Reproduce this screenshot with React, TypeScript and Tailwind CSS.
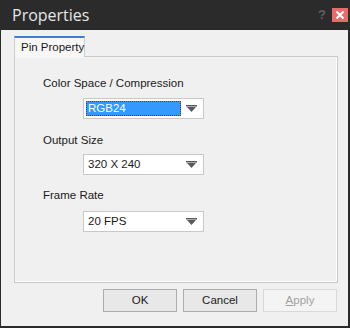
import React from "react";

function Arrow() {
  return (
    <svg width="11" height="7" viewBox="0 0 11 7" className="shrink-0">
      <rect x="0" y="0" width="11" height="1.5" fill="#5a5a5a" />
      <polygon points="1,2 10,2 5.5,7" fill="#5a5a5a" />
    </svg>
  );
}

function Select({ value, focused }: { value: string; focused?: boolean }) {
  return (
    <div className="ml-[40px] flex h-[21px] w-[121px] items-center border border-[#c8c8c8] bg-white pr-[4px]">
      <div className="flex h-full flex-1 items-center p-[2px]">
        {focused ? (
          <div className="flex h-full w-full items-center border border-dotted border-[#6a3a00] bg-[#3399ff] pl-[1px] text-white">
            {value}
          </div>
        ) : (
          <div className="pl-[2px] text-[#1a1a1a]">{value}</div>
        )}
      </div>
      <div className="flex w-[16px] justify-center">
        <Arrow />
      </div>
    </div>
  );
}

function Button({ label, disabled }: { label: string; disabled?: boolean }) {
  return (
    <div
      className={`flex h-[23px] w-[74px] items-center justify-center border ${
        disabled ? "border-[#d9d9d9] bg-[#f4f4f4] text-[#a0a0a0]" : "border-[#adadad] bg-[#e8e8e8] text-[#1a1a1a]"
      }`}
    >
      {disabled ? (
        <span>
          <span className="underline">A</span>pply
        </span>
      ) : (
        label
      )}
    </div>
  );
}

export default function App() {
  return (
    <div
      className="flex h-[328px] w-[350px] flex-col bg-[#2b2b2b] text-[11.5px]"
      style={{ fontFamily: '"Liberation Sans", Arial, sans-serif' }}
    >
      <div className="flex h-[30px] items-center pl-[12px] pr-[2px]">
        <span className="flex-1 text-[16px] text-[#e6e6e6]" style={{ fontFamily: '"Open Sans", "Noto Sans", sans-serif' }}>
          Properties
        </span>
        <span className="mr-[6px] text-[13px] font-bold text-[#5e5e5e]">?</span>
        <div className="flex h-[14px] w-[16px] items-center justify-center bg-[#e86b6b]">
          <svg width="10" height="10" viewBox="0 0 10 10">
            <path d="M1.5 1.5 L8.5 8.5 M8.5 1.5 L1.5 8.5" stroke="#fff" strokeWidth="2" />
          </svg>
        </div>
      </div>
      <div className="mx-[1px] mb-[2px] mr-[2px] flex flex-1 flex-col bg-[#f0f0f0] pl-[13px] pr-[10px] pt-[6px]">
        <div className="flex">
          <div className="relative z-10 -mb-[1px] flex h-[21px] w-[71px] items-center whitespace-nowrap border-x border-t-2 border-x-[#d0d0d0] border-t-[#3c7fd6] bg-[#f7f7f7] pl-[6px] text-[#1a1a1a]">
            Pin Property
          </div>
        </div>
        <div className="flex h-[227px] flex-col border border-[#c8c8c8] bg-[#f5f5f5] p-[1px] shadow-[inset_-1px_-1px_0_#ffffff]">
          <div className="flex flex-1 flex-col bg-[#f0f0f0] pl-[27px] pt-[18px] text-[#1a1a1a]">
            <div className="h-[14px] leading-[14px]">Color Space / Compression</div>
            <div className="mt-[8px]">
              <Select value="RGB24" focused />
            </div>
            <div className="mt-[14px] h-[14px] leading-[14px]">Output Size</div>
            <div className="mt-[7px]">
              <Select value="320 X 240" />
            </div>
            <div className="mt-[13px] h-[14px] leading-[14px]">Frame Rate</div>
            <div className="mt-[9px]">
              <Select value="20 FPS" />
            </div>
          </div>
        </div>
        <div className="mt-[6px] flex justify-end gap-[6px] pr-[1px]">
          <Button label="OK" />
          <Button label="Cancel" />
          <Button label="Apply" disabled />
        </div>
      </div>
    </div>
  );
}
